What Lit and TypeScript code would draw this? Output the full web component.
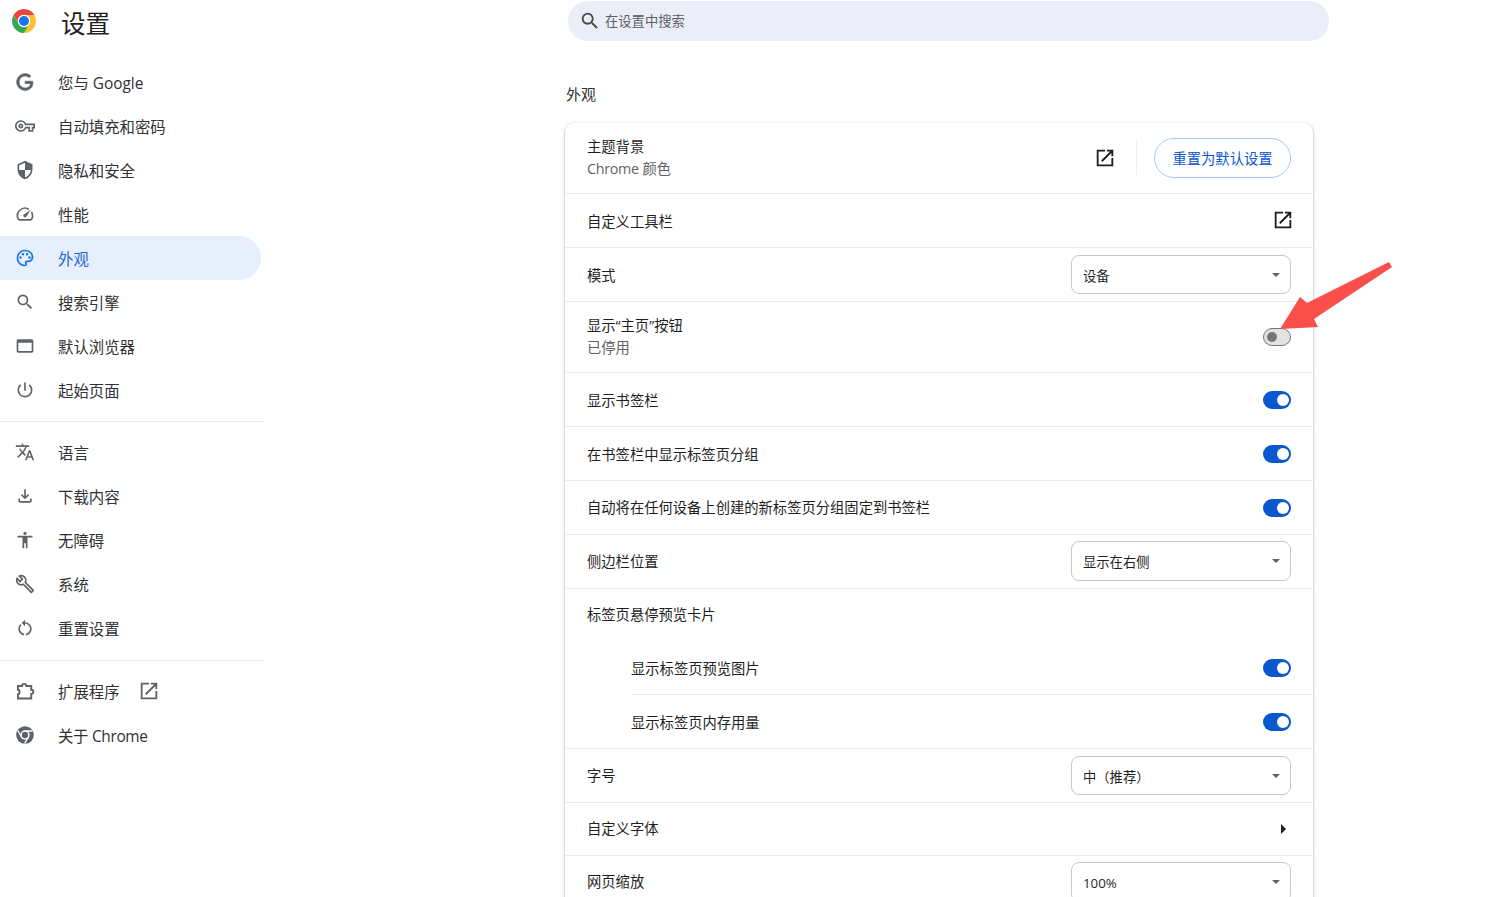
import { LitElement, html, css, nothing } from "lit";
import { customElement } from "lit/decorators.js";

const P: Record<string, string> = {
  g: "M21.35 11.1h-9.17v2.73h6.51c-.33 3.81-3.5 5.44-6.5 5.44C8.36 19.27 5 16.25 5 12c0-4.1 3.2-7.27 7.2-7.27 3.09 0 4.9 1.97 4.9 1.97L19 4.72S16.56 2 12.1 2C6.42 2 2.03 6.8 2.03 12c0 5.05 4.13 10 10.22 10 5.35 0 9.25-3.67 9.25-9.09 0-1.15-.15-1.81-.15-1.81z",
  key: "M22 19h-6v-4h-2.68c-1.14 2.42-3.6 4-6.32 4-3.86 0-7-3.14-7-7s3.14-7 7-7c2.72 0 5.17 1.58 6.32 4H24v6h-2v4zm-4-2h2v-4h2v-2H11.94l-.23-.67C11.01 8.34 9.11 7 7 7c-2.76 0-5 2.24-5 5s2.24 5 5 5c2.11 0 4.01-1.34 4.71-3.33l.23-.67H18v4zM7 15c-1.65 0-3-1.35-3-3s1.35-3 3-3 3 1.35 3 3-1.35 3-3 3zm0-4c-.55 0-1 .45-1 1s.45 1 1 1 1-.45 1-1-.45-1-1-1z",
  shield: "M12 1L3 5v6c0 5.55 3.84 10.74 9 12 5.16-1.26 9-6.45 9-12V5l-9-4zm0 10.99h7c-.53 4.12-3.28 7.79-7 8.94V12H5V6.3l7-3.11v8.8z",
  speed: "M20.38 8.57l-1.23 1.85a8 8 0 0 1-.22 7.58H5.07A8 8 0 0 1 15.58 6.85l1.85-1.23A10 10 0 0 0 3.35 19a2 2 0 0 0 1.72 1h13.85a2 2 0 0 0 1.74-1 10 10 0 0 0-.27-10.44zm-9.79 6.84a2 2 0 0 0 2.83 0l5.66-8.49-8.49 5.66a2 2 0 0 0 0 2.83z",
  palette: "M12 22C6.49 22 2 17.51 2 12S6.49 2 12 2s10 4.04 10 9c0 3.31-2.69 6-6 6h-1.77c-.28 0-.5.22-.5.5 0 .12.05.23.13.33.41.47.64 1.06.64 1.67A2.5 2.5 0 0 1 12 22zm0-18c-4.41 0-8 3.59-8 8s3.59 8 8 8c.28 0 .5-.22.5-.5a.54.54 0 0 0-.14-.35c-.41-.46-.63-1.05-.63-1.65a2.5 2.5 0 0 1 2.5-2.5H16c2.21 0 4-1.79 4-4 0-3.86-3.59-7-8-7zM6.5 10a1.5 1.5 0 1 1 0 3 1.5 1.5 0 0 1 0-3zm3-4a1.5 1.5 0 1 1 0 3 1.5 1.5 0 0 1 0-3zm5 0a1.5 1.5 0 1 1 0 3 1.5 1.5 0 0 1 0-3zm3 4a1.5 1.5 0 1 1 0 3 1.5 1.5 0 0 1 0-3z",
  search: "M15.5 14h-.79l-.28-.27A6.471 6.471 0 0 0 16 9.5 6.5 6.5 0 1 0 9.5 16c1.61 0 3.09-.59 4.23-1.57l.27.28v.79l5 4.99L20.49 19l-4.99-5zm-6 0C7.01 14 5 11.99 5 9.5S7.01 5 9.5 5 14 7.01 14 9.5 11.99 14 9.5 14z",
  web: "M20 4H4c-1.11 0-2 .9-2 2v12c0 1.1.89 2 2 2h16c1.1 0 2-.9 2-2V6c0-1.1-.89-2-2-2zm0 14H4V8h16v10z",
  power: "M13 3h-2v10h2V3zm4.83 2.17l-1.42 1.42A6.92 6.92 0 0 1 19 12c0 3.87-3.13 7-7 7A6.995 6.995 0 0 1 7.58 6.58L6.17 5.17A8.932 8.932 0 0 0 3 12a9 9 0 0 0 18 0c0-2.74-1.23-5.18-3.17-6.83z",
  lang: "M12.87 15.07l-2.54-2.51.03-.03c1.74-1.94 2.98-4.17 3.71-6.53H17V4h-7V2H8v2H1v1.99h11.17C11.5 7.92 10.44 9.75 9 11.35 8.07 10.32 7.3 9.19 6.69 8h-2c.73 1.63 1.73 3.17 2.98 4.56l-5.09 5.02L4 19l5-5 3.11 3.11.76-2.04zM18.5 10h-2L12 22h2l1.12-3h4.75L21 22h2l-4.5-12zm-2.62 7l1.62-4.33L19.12 17h-3.24z",
  down: "M18 15v3H6v-3H4v3c0 1.1.9 2 2 2h12c1.1 0 2-.9 2-2v-3h-2zm-1-4l-1.41-1.41L13 12.17V4h-2v8.17L8.41 9.59 7 11l5 5 5-5z",
  a11y: "M12 2c1.1 0 2 .9 2 2s-.9 2-2 2-2-.9-2-2 .9-2 2-2zm9 7h-6v13h-2v-6h-2v6H9V9H3V7h18v2z",
  build: "M22.61 18.99l-9.08-9.08c.93-2.34.45-5.1-1.44-7C9.79.61 6.21.4 3.66 2.26L7.5 6.11 6.08 7.52 2.25 3.69C.39 6.23.6 9.82 2.9 12.11c1.86 1.86 4.57 2.35 6.89 1.48l9.11 9.11c.39.39 1.02.39 1.41 0l2.3-2.3c.4-.38.4-1.01 0-1.41zm-3 1.6l-9.46-9.46c-.61.45-1.29.72-2 .82-1.36.2-2.79-.21-3.83-1.25C3.37 9.76 2.93 8.5 3 7.26l3.09 3.09 4.24-4.24-3.09-3.09c1.24-.07 2.49.37 3.44 1.31 1.08 1.08 1.49 2.57 1.24 3.96-.12.71-.42 1.37-.88 1.96l9.45 9.45-.88.88z",
  reset: "M12 5V2L8 6l4 4V7c3.31 0 6 2.69 6 6 0 2.97-2.17 5.43-5 5.91v2.02c3.95-.49 7-3.85 7-7.93 0-4.42-3.58-8-8-8zm-6 8c0-1.65.67-3.15 1.76-4.24L6.34 7.34A8.014 8.014 0 0 0 4 13c0 4.08 3.05 7.44 7 7.93v-2.02c-2.83-.48-5-2.94-5-5.91z",
  open: "M19 19H5V5h7V3H3v18h18v-9h-2v7zM14 3v2h3.59l-9.83 9.83 1.41 1.41L19 6.41V10h2V3h-7z",
};

const icon = (name: string, cls = "ic") =>
  html`<svg class=${cls} viewBox="0 0 24 24"><path d=${P[name]}></path></svg>`;

const chromeGrey = html`<svg class="ic" viewBox="0 0 24 24">
  <circle cx="12" cy="12" r="10.6"></circle>
  <path class="gap" d="M12 7.2H21M7.85 14.4L3.4 6.6M16.15 14.4L11.6 22"></path>
  <circle cx="12" cy="12" r="5.6" class="hole"></circle>
  <circle cx="12" cy="12" r="3.8"></circle>
</svg>`;

const extIcon = html`<svg class="ic" viewBox="0 0 24 24">
  <path class="line" d="M3.5 6h5c0-3.4 5-3.4 5 0h6v4.5c3.4 0 3.4 5 0 5V21H3.5v-5c2.6 0 2.6-5.5 0-5.5Z"></path>
</svg>`;

type NavItem = { i?: string; t: string; active?: boolean; link?: boolean; tight?: boolean };
const groups: NavItem[][] = [
  [
    { i: "g", t: "您与 Google" },
    { i: "key", t: "自动填充和密码" },
    { i: "shield", t: "隐私和安全" },
    { i: "speed", t: "性能" },
    { i: "palette", t: "外观", active: true },
    { i: "search", t: "搜索引擎" },
    { i: "web", t: "默认浏览器" },
    { i: "power", t: "起始页面" },
  ],
  [
    { i: "lang", t: "语言" },
    { i: "down", t: "下载内容" },
    { i: "a11y", t: "无障碍" },
    { i: "build", t: "系统" },
    { i: "reset", t: "重置设置" },
  ],
  [
    { i: "ext", t: "扩展程序", link: true },
    { t: "关于 Chrome", tight: true },
  ],
];

@customElement("app-root")
export class AppRoot extends LitElement {
  static styles = css`
    :host {
      display: block;
      position: relative;
      height: 897px;
      overflow: hidden;
      background: #fff;
      color: #1f1f1f;
      font-family: "Open Sans", "Noto Sans CJK SC", sans-serif;
    }
    .page { display: flex; height: 100%; }
    .side { width: 264px; flex: none; }
    .brand { height: 60px; display: flex; align-items: flex-start; padding: 9px 0 0 12px; box-sizing: border-box; gap: 25px; }
    .logo { width: 24px; height: 24px; }
    .brand h1 { margin: -5.5px 0 0; font-size: 24.6px; font-weight: 400; line-height: 36px; font-family: "Noto Sans CJK SC", sans-serif; }
    .item { height: 44px; width: 261px; display: flex; align-items: center; padding-left: 15px; box-sizing: border-box; font-size: 15.4px; color: #303134; gap: 23px; border-radius: 0 22px 22px 0; }
    .item.active { background: #e7effd; color: #1a64d8; }
    .item.active .ic { fill: #1a73e8; }
    .tight { letter-spacing: -0.3px; }
    .ic { width: 20px; height: 20px; fill: #5f6368; flex: none; }
    .ic .hole { fill: #fff; }
    .ic .gap { stroke: #fff; stroke-width: 1.6; fill: none; }
    .ic .line { fill: none; stroke: #5f6368; stroke-width: 2.3; }
    .g path { stroke: #5f6368; stroke-width: 0.9; }
    .lnk { width: 22px; height: 22px; fill: #5f6368; margin-left: -5px; }
    hr { border: 0; border-top: 1px solid #e8e9eb; margin: 9px 0 8px; }
    hr.b { margin-top: 10px; }
    .main { flex: 1; padding-left: 301px; min-width: 0; }
    .search { margin: 1px 0 0 3px; width: 761px; height: 40px; border-radius: 20px; background: #ebeef8; display: flex; align-items: center; padding-left: 11px; box-sizing: border-box; gap: 4px; font-size: 13.3px; color: #5b5e63; }
    .search svg { width: 22px; height: 22px; fill: #474747; }
    .search span { margin-bottom: 2px; }
    h2 { margin: 43px 0 0 1px; font-size: 15px; font-weight: 400; line-height: 20px; height: 39px; color: #303134; }
    .card { width: 748px; border-radius: 9px 9px 0 0; background: #fff; box-shadow: 0 1px 2px rgba(60,64,67,.3), 0 1px 3px 1px rgba(60,64,67,.15); font-size: 14.3px; }
    .row { min-height: 54px; box-sizing: border-box; padding: 0 22px; display: flex; align-items: center; justify-content: space-between; border-top: 1px solid #e9eaeb; }
    .row:first-child { border-top: 0; min-height: 70px; }
    .row.tall { min-height: 71px; }
    .row.nb { border-top: 0; }
    .row.h53 { min-height: 53px; }
    .row > span:first-child { margin-bottom: 2px; }
    .row.m1 > span:first-child { margin-bottom: 1px; }
    .row.m4 > span:first-child { margin-bottom: 4px; }
    .row.last > span:first-child { margin-bottom: 4px; }
    .sub { padding: 0 22px 0 0; margin-left: 66px; }
    .sec { color: #5f6368; margin-top: 2px; line-height: 20px; }
    .pri { line-height: 20px; }
    .actions { display: flex; align-items: center; }
    .open { width: 22px; height: 22px; fill: #1f1f1f; display: block; }
    .open.r { margin: -1px -3px 0 0; }
    .vsep { width: 1px; height: 34px; background: #eceded; margin: 0 17px 0 20px; }
    .btn { width: 137px; height: 40px; box-sizing: border-box; border: 1px solid #a8c7fa; border-radius: 20px; color: #0b57d0; display: flex; align-items: center; justify-content: center; font-size: 14.3px; padding-bottom: 2px; }
    .sel { width: 220px; height: 39px; box-sizing: border-box; border: 1px solid #c7c7c7; border-radius: 8px; padding: 0 11px; display: flex; align-items: center; justify-content: space-between; font-size: 13.3px; }
    .sel > span:first-child { margin-top: 2px; }
    .sel.up { margin-bottom: 2px; height: 40px; }
    .tri { width: 0; height: 0; border: 4px solid transparent; border-top: 4px solid #5f6368; border-bottom: 0; margin-right: -1px; }
    .tog { width: 28px; height: 18px; border-radius: 9px; box-sizing: border-box; background: #0b57d0; position: relative; display: block; }
    .tog::after { content: ""; position: absolute; right: 2px; top: 3px; width: 12px; height: 12px; border-radius: 50%; background: #fff; }
    .tog.off { background: #e1e3e1; border: 1px solid #747775; }
    .tog.off::after { left: 3px; right: auto; top: 3px; width: 10px; height: 10px; background: #747775; }
    .caret { width: 0; height: 0; border: 5px solid transparent; border-left: 5px solid #1f1f1f; border-right: 0; margin-right: 5px; }
    .arrow { position: absolute; left: 0; top: 0; width: 1509px; height: 897px; pointer-events: none; }
  `;

  private nav(n: NavItem) {
    const ic = n.i === "ext" ? extIcon : n.i === "g" ? icon("g", "ic g") : n.i ? icon(n.i) : chromeGrey;
    return html`<div class="item ${n.active ? "active" : ""}">
      ${ic}<span class=${n.tight ? "tight" : ""}>${n.t}</span>
      ${n.link ? icon("open", "lnk") : nothing}
    </div>`;
  }

  private toggleRow(t: string, cls = "") {
    return html`<div class="row ${cls}"><span>${t}</span><span class="tog"></span></div>`;
  }

  private selectRow(t: string, v: string, cls = "", rowCls = "") {
    return html`<div class="row ${rowCls}"><span>${t}</span>
      <div class="sel ${cls}"><span>${v}</span><span class="tri"></span></div></div>`;
  }

  render() {
    return html`
      <div class="page">
        <aside class="side">
          <div class="brand">
            <svg class="logo" viewBox="0 0 24 24">
              <path fill="#e8453c" d="M1.61 6A12 12 0 0 1 22.39 6H12A6 6 0 0 0 6.8 15Z"></path>
              <path fill="#fbc02d" d="M22.39 6A12 12 0 0 1 12 24L17.2 15A6 6 0 0 0 12 6Z"></path>
              <path fill="#34a853" d="M12 24A12 12 0 0 1 1.61 6L6.8 15A6 6 0 0 0 17.2 15Z"></path>
              <circle cx="12" cy="12" r="6.2" fill="#fff"></circle>
              <circle cx="12" cy="12" r="5" fill="#1a73e8"></circle>
            </svg>
            <h1>设置</h1>
          </div>
          ${groups.map(
            (g, i) => html`${i ? html`<hr class=${i === 2 ? "b" : ""} />` : nothing}${g.map((n) => this.nav(n))}`
          )}
        </aside>
        <main class="main">
          <div class="search">${icon("search", "")}<span>在设置中搜索</span></div>
          <h2>外观</h2>
          <section class="card">
            <div class="row">
              <div><div class="pri">主题背景</div><div class="sec"><span class="tight">Chrome</span> 颜色</div></div>
              <div class="actions">
                ${icon("open", "open")}
                <div class="vsep"></div>
                <div class="btn">重置为默认设置</div>
              </div>
            </div>
            <div class="row m1"><span>自定义工具栏</span>${icon("open", "open r")}</div>
            ${this.selectRow("模式", "设备", "", "m1")}
            <div class="row tall">
              <div><div class="pri">显示“主页”按钮</div><div class="sec">已停用</div></div>
              <span class="tog off"></span>
            </div>
            ${this.toggleRow("显示书签栏", "m1")}
            ${this.toggleRow("在书签栏中显示标签页分组", "m1")}
            ${this.toggleRow("自动将在任何设备上创建的新标签页分组固定到书签栏")}
            ${this.selectRow("侧边栏位置", "显示在右侧", "up")}
            <div class="row h53 m4"><span>标签页悬停预览卡片</span></div>
            ${this.toggleRow("显示标签页预览图片", "nb sub h53 m1")}
            ${this.toggleRow("显示标签页内存用量", "sub m1")}
            ${this.selectRow("字号", "中（推荐）")}
            <div class="row h53 m4"><span>自定义字体</span><span class="caret"></span></div>
            ${this.selectRow("网页缩放", "100%", "up", "last")}
          </section>
        </main>
      </div>
      <svg class="arrow" viewBox="0 0 1509 897">
        <polygon fill="#f94f4a" points="1280,329 1300,297 1307,303 1389,262 1392,267 1314,319 1318,327"></polygon>
      </svg>
    `;
  }
}
